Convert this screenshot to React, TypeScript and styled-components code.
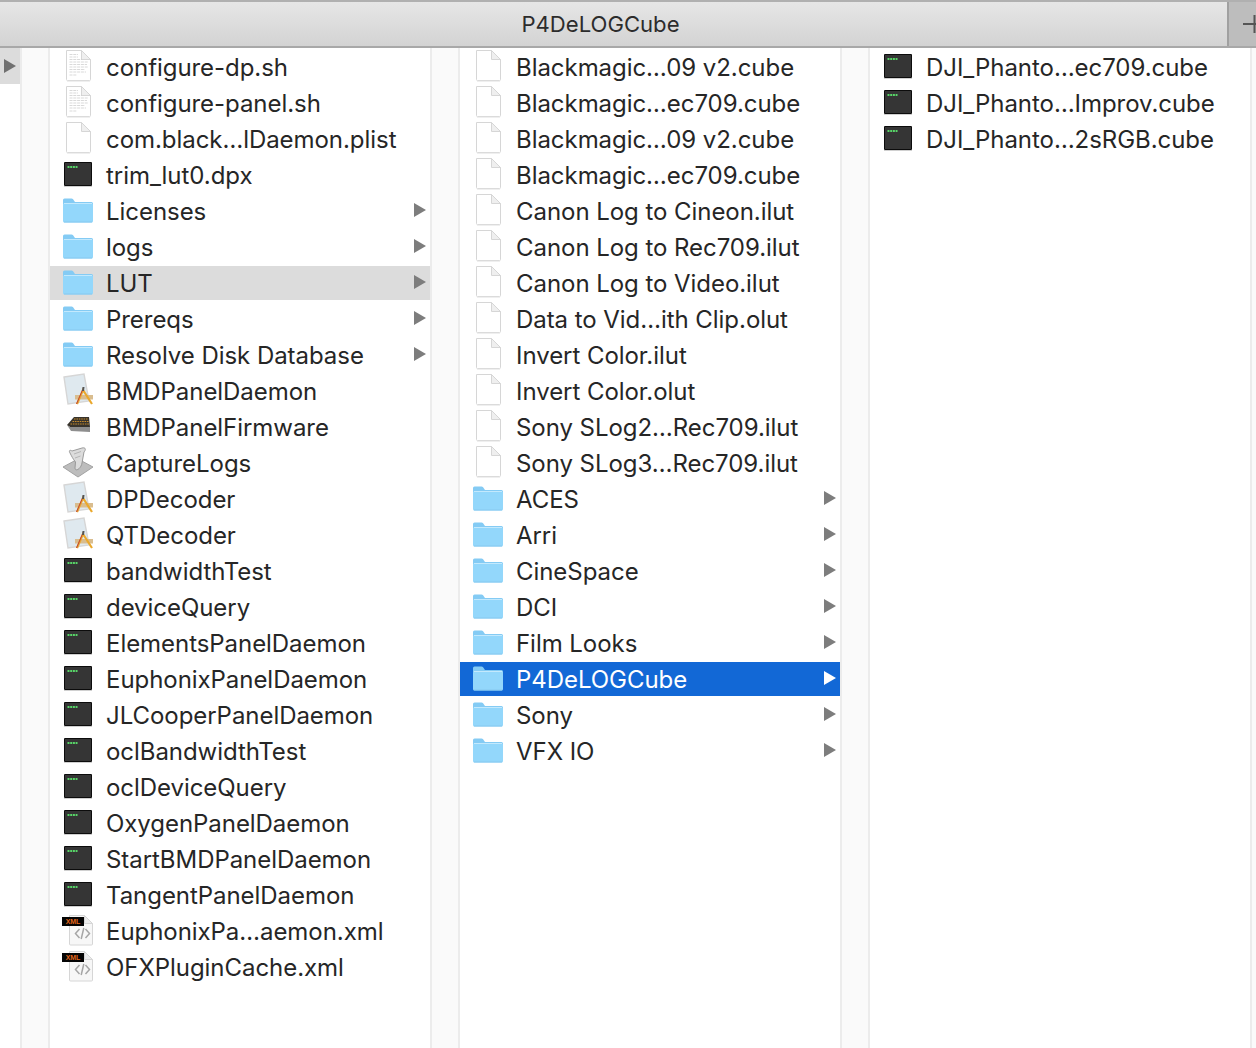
import React from 'react';
import styled, { createGlobalStyle } from 'styled-components';

const Global = createGlobalStyle`
  html, body { margin: 0; padding: 0; background: #fff; overflow: hidden; }
  #root { width: 1256px; height: 1048px; }
`;

const Frame = styled.div`
  width: 1256px;
  height: 1048px;
  display: flex;
  flex-direction: column;
  overflow: hidden;
  font-family: Inter, "Liberation Sans", sans-serif;
  color: #262626;
`;

const TitleBar = styled.header`
  height: 44px;
  flex: none;
  display: flex;
  border-top: 2px solid #b0b0b0;
  border-bottom: 2px solid #a8a8a8;
  background: linear-gradient(#e6e6e6, #d3d3d3);
`;

const Title = styled.div`
  flex: 1;
  display: flex;
  align-items: center;
  justify-content: center;
  margin-right: 26px;
  font-size: 22.1px;
  color: #2c2c2c;
`;

const AddTab = styled.div`
  width: 29px;
  flex: none;
  box-sizing: border-box;
  border-left: 2px solid #a0a0a0;
  background: #bdbdbd;
  display: flex;
  align-items: center;
  justify-content: flex-end;
`;

const Browser = styled.main`
  flex: 1;
  display: flex;
  min-height: 0;
`;

const Sliver = styled.div`
  width: 20px;
  flex: none;
`;

const SliverRow = styled.div`
  height: 36px;
  background: #dcdcdc;
  display: flex;
  align-items: center;
  justify-content: center;
`;

const Divider = styled.div`
  width: 30px;
  flex: none;
  box-sizing: border-box;
  background: #fafafa;
  border-left: 2px solid #ececec;
  border-right: 2px solid #ececec;
`;

const Column = styled.section`
  width: 380px;
  flex: none;
  display: flex;
  flex-direction: column;
  gap: 2px;
  padding-top: 2px;
  box-sizing: border-box;
`;

const LastColumn = styled(Column)`
  flex: 1;
  width: auto;
`;

const Edge = styled.div`
  width: 6px;
  flex: none;
  box-sizing: border-box;
  background: #fafafa;
  border-left: 2px solid #ececec;
`;

const Row = styled.div<{ $state?: 'active' | 'muted' }>`
  height: 34px;
  flex: none;
  display: flex;
  align-items: center;
  padding: 0 4px 0 12px;
  gap: 12px;
  font-size: 24px;
  letter-spacing: -0.05px;
  white-space: nowrap;
  background: ${p => (p.$state === 'active' ? '#1268d6' : p.$state === 'muted' ? '#dcdcdc' : 'transparent')};
  color: ${p => (p.$state === 'active' ? '#fff' : '#262626')};
`;

const Icon = styled.svg`
  width: 32px;
  height: 32px;
  flex: none;
  display: block;
  overflow: visible;
`;

const Label = styled.span`
  flex: 1;
  align-self: flex-start;
  line-height: 36px;
`;

const Arrow = styled.svg`
  width: 12px;
  height: 16px;
  flex: none;
  margin-top: -2px;
`;

const SliverArrow = styled.svg`
  width: 12px;
  height: 14px;
  flex: none;
`;

const BadgeText = styled.text`
  font-family: "Liberation Sans", sans-serif;
  font-size: 7px;
  font-weight: 700;
  fill: #e2671c;
`;

const Triangle = ({ color }: { color: string }) => (
  <Arrow viewBox="0 0 12 16">
    <path d="M0 1 L12 8 L0 15 Z" fill={color} />
  </Arrow>
);

const DocBase = ({ lines }: { lines?: boolean }) => (
  <>
    <path d="M4.5 -0.5 H19.5 L28.5 8.5 V28.5 a1 1 0 0 1 -1 1 H5.5 a1 1 0 0 1 -1 -1 Z" fill="#fff" stroke="#d6d6d6" />
    <path d="M19.5 -0.5 V8.5 H28.5 Z" fill="#efefef" stroke="#d6d6d6" />
    <path d="M5 30.2 H28" stroke="#e8e8e8" strokeWidth="1" />
    {lines && (
      <g stroke="#c8c8c8" strokeWidth="0.7" strokeDasharray="3 0.8">
        {[3.5, 6, 8.5].map(y => <path key={y} d={`M7.5 ${y} H${y < 8 ? 16 : 20}`} />)}
        {[11, 13.5, 16, 18.5, 21].map((y, i) => <path key={y} d={`M7.5 ${y} H${[26, 25, 26, 23, 24][i]}`} />)}
        <path d="M7.5 24 H15" />
      </g>
    )}
  </>
);

const Terminal = () => (
  <>
    <rect x="2" y="3" width="28" height="24" rx="1" fill="#0c0c0c" />
    <rect x="3" y="4" width="26" height="22" fill="#353535" />
    <path d="M5.5 8 H15.5" stroke="#58d568" strokeWidth="1.8" strokeDasharray="2 0.7" />
    <path d="M2 27.5 H30" stroke="#d0d0d0" strokeWidth="1" />
  </>
);

const Folder = () => (
  <>
    <path d="M1 9 V5 a1.5 1.5 0 0 1 1.5 -1.5 H9.5 a2 2 0 0 1 1.6 0.8 L13 7 H29.5 a1.5 1.5 0 0 1 1.5 1.5 V10 Z" fill="#84cbf4" />
    <path d="M1 9.5 a1.5 1.5 0 0 1 1.5 -1.5 H29.5 a1.5 1.5 0 0 1 1.5 1.5 V26 a1.5 1.5 0 0 1 -1.5 1.5 H2.5 a1.5 1.5 0 0 1 -1.5 -1.5 Z" fill="#93d7fb" />
    <path d="M2 8.5 H30" stroke="#c3e9fd" strokeWidth="1" />
    <path d="M2 27 H30" stroke="#86c8ef" strokeWidth="1" />
  </>
);

const AppExec = () => (
  <>
    <path d="M2 2 L22 -1 L27 26 L6 29 Z" fill="#dfe9ef" stroke="#d6d6d6" strokeWidth="1.4" />
    <path d="M13 20 H31 V24.5 H13 Z" fill="#d9bd8f" />
    <path d="M15 29 L21 15 L30 29" fill="none" stroke="#eaa92e" strokeWidth="2.2" />
    <path d="M14.5 29 L20.5 15" fill="none" stroke="#c0453a" strokeWidth="1" />
    <path d="M21.5 12 L21 16" stroke="#555" strokeWidth="2" />
  </>
);

const Chip = () => (
  <>
    <path d="M5 14 L12 6 H27 L28 16 H8 Z" fill="#37332c" />
    <g stroke="#c68a2a" strokeWidth="1.2" strokeDasharray="1.6 0.8">
      <path d="M12 8 H26" /><path d="M10.5 10.5 H26.5" /><path d="M8.5 13 H27" />
    </g>
    <path d="M5 14 L9 20 L28 21 V16 H8 Z" fill="#8e8e8e" />
  </>
);

const Scroll = () => (
  <>
    <path d="M1 20 L16 12 L31 20 L16 30 Z" fill="#bdbdbd" stroke="#a2a2a2" />
    <path d="M8 6 C6.5 3.5 8 2.5 10 4 L20 1 C24 0 24 3 22 5 L20 16 C19 22 13 25 13 21 L13.5 15 C11 12 9.5 9 8 6 Z" fill="#dcdcdc" stroke="#929292" strokeWidth="0.9" />
    <path d="M12 7 L19 4.5 M13 11 L18.5 9" stroke="#ababab" strokeWidth="0.8" />
  </>
);

const Xml = () => (
  <>
    <path d="M7.5 0.5 H22.5 L30.5 8.5 V29 a1 1 0 0 1 -1 1 H8.5 a1 1 0 0 1 -1 -1 Z" fill="#f7f7f7" stroke="#d6d6d6" />
    <path d="M22.5 0.5 V8.5 H30.5 Z" fill="#ececec" stroke="#d6d6d6" />
    <rect x="0" y="2" width="22" height="9" fill="#050505" />
    <BadgeText x="11" y="9" textAnchor="middle">XML</BadgeText>
    <path d="M17.5 14 L13.5 18.5 L17.5 23 M23.5 14 L27.5 18.5 L23.5 23 M21.8 13 L19.2 24" fill="none" stroke="#a6a6a6" strokeWidth="1.5" />
  </>
);

type Kind = 'text' | 'blank' | 'term' | 'folder' | 'app' | 'chip' | 'scroll' | 'xml';

const drawings: Record<Kind, React.ReactNode> = {
  text: <DocBase lines />,
  blank: <DocBase />,
  term: <Terminal />,
  folder: <Folder />,
  app: <AppExec />,
  chip: <Chip />,
  scroll: <Scroll />,
  xml: <Xml />,
};

type Item = { kind: Kind; name: string; state?: 'active' | 'muted' };

const first: Item[] = [
  { kind: 'text', name: 'configure-dp.sh' },
  { kind: 'text', name: 'configure-panel.sh' },
  { kind: 'blank', name: 'com.black…lDaemon.plist' },
  { kind: 'term', name: 'trim_lut0.dpx' },
  { kind: 'folder', name: 'Licenses' },
  { kind: 'folder', name: 'logs' },
  { kind: 'folder', name: 'LUT', state: 'muted' },
  { kind: 'folder', name: 'Prereqs' },
  { kind: 'folder', name: 'Resolve Disk Database' },
  { kind: 'app', name: 'BMDPanelDaemon' },
  { kind: 'chip', name: 'BMDPanelFirmware' },
  { kind: 'scroll', name: 'CaptureLogs' },
  { kind: 'app', name: 'DPDecoder' },
  { kind: 'app', name: 'QTDecoder' },
  { kind: 'term', name: 'bandwidthTest' },
  { kind: 'term', name: 'deviceQuery' },
  { kind: 'term', name: 'ElementsPanelDaemon' },
  { kind: 'term', name: 'EuphonixPanelDaemon' },
  { kind: 'term', name: 'JLCooperPanelDaemon' },
  { kind: 'term', name: 'oclBandwidthTest' },
  { kind: 'term', name: 'oclDeviceQuery' },
  { kind: 'term', name: 'OxygenPanelDaemon' },
  { kind: 'term', name: 'StartBMDPanelDaemon' },
  { kind: 'term', name: 'TangentPanelDaemon' },
  { kind: 'xml', name: 'EuphonixPa…aemon.xml' },
  { kind: 'xml', name: 'OFXPluginCache.xml' },
];

const second: Item[] = [
  { kind: 'blank', name: 'Blackmagic…09 v2.cube' },
  { kind: 'blank', name: 'Blackmagic…ec709.cube' },
  { kind: 'blank', name: 'Blackmagic…09 v2.cube' },
  { kind: 'blank', name: 'Blackmagic…ec709.cube' },
  { kind: 'blank', name: 'Canon Log to Cineon.ilut' },
  { kind: 'blank', name: 'Canon Log to Rec709.ilut' },
  { kind: 'blank', name: 'Canon Log to Video.ilut' },
  { kind: 'blank', name: 'Data to Vid…ith Clip.olut' },
  { kind: 'blank', name: 'Invert Color.ilut' },
  { kind: 'blank', name: 'Invert Color.olut' },
  { kind: 'blank', name: 'Sony SLog2…Rec709.ilut' },
  { kind: 'blank', name: 'Sony SLog3…Rec709.ilut' },
  { kind: 'folder', name: 'ACES' },
  { kind: 'folder', name: 'Arri' },
  { kind: 'folder', name: 'CineSpace' },
  { kind: 'folder', name: 'DCI' },
  { kind: 'folder', name: 'Film Looks' },
  { kind: 'folder', name: 'P4DeLOGCube', state: 'active' },
  { kind: 'folder', name: 'Sony' },
  { kind: 'folder', name: 'VFX IO' },
];

const third: Item[] = [
  { kind: 'term', name: 'DJI_Phanto…ec709.cube' },
  { kind: 'term', name: 'DJI_Phanto…Improv.cube' },
  { kind: 'term', name: 'DJI_Phanto…2sRGB.cube' },
];

const Rows = ({ items }: { items: Item[] }) => (
  <>
    {items.map((item, i) => (
      <Row key={i} $state={item.state}>
        <Icon viewBox="0 0 32 32">{drawings[item.kind]}</Icon>
        <Label>{item.name}</Label>
        {item.kind === 'folder' && <Triangle color={item.state === 'active' ? '#ffffff' : '#7d7d7d'} />}
      </Row>
    ))}
  </>
);

export default function App() {
  return (
    <Frame>
      <Global />
      <TitleBar>
        <Title>P4DeLOGCube</Title>
        <AddTab>
          <svg width="13" height="18" viewBox="0 0 13 18">
            <path d="M0 9 H13 M11.5 0 V18" stroke="#555" strokeWidth="2" fill="none" />
          </svg>
        </AddTab>
      </TitleBar>
      <Browser>
        <Sliver>
          <SliverRow>
            <SliverArrow viewBox="0 0 12 14">
              <path d="M0 0 L12 7 L0 14 Z" fill="#707070" />
            </SliverArrow>
          </SliverRow>
        </Sliver>
        <Divider />
        <Column><Rows items={first} /></Column>
        <Divider />
        <Column><Rows items={second} /></Column>
        <Divider />
        <LastColumn><Rows items={third} /></LastColumn>
        <Edge />
      </Browser>
    </Frame>
  );
}
